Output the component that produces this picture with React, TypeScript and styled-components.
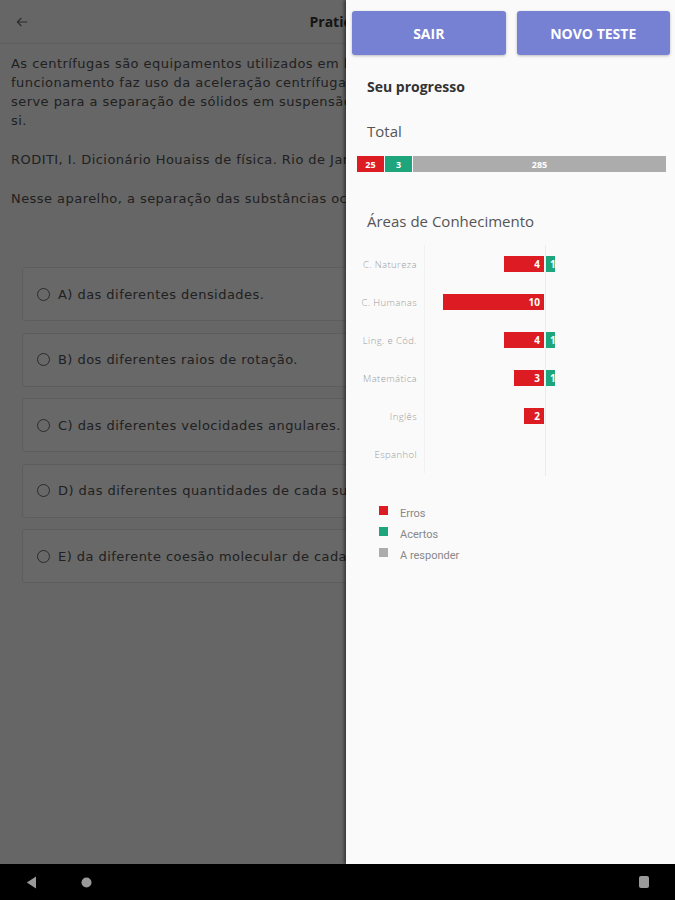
import React from 'react';
import styled, { createGlobalStyle } from 'styled-components';

const GlobalStyle = createGlobalStyle`
	html, body {
		margin: 0;
		padding: 0;
		background: #000;
	}
	* {
		box-sizing: border-box;
	}
`;

const Screen = styled.div`
	width: 675px;
	height: 900px;
	display: flex;
	flex-direction: column;
	overflow: hidden;
	font-family: 'Open Sans', sans-serif;
`;

const Stage = styled.div`
	flex: 1;
	display: flex;
	overflow: hidden;
`;

/* the question screen behind the drawer, only its left part shows */
const Page = styled.div`
	position: relative;
	flex: 1;
	overflow: hidden;
	background: #f7f7f7;
	color: #505050;
`;

const PageContent = styled.div`
	width: 675px;
`;

const Header = styled.div`
	height: 44px;
	display: flex;
	align-items: center;
	padding: 0 14px;
	border-bottom: 1px solid #e4e4e4;
`;

const BackButton = styled.span`
	display: flex;
	align-items: center;
	color: #666;
`;

const Title = styled.div`
	flex: 1;
	text-align: center;
	font-weight: 700;
	font-size: 14px;
	color: #333;
	margin-right: 16px;
`;

const Statement = styled.div`
	padding: 10px 11px 0;
	font-family: 'DejaVu Sans', sans-serif;
	font-size: 13px;
	letter-spacing: 0.45px;
	line-height: 19px;
`;

const Line = styled.div`
	white-space: nowrap;
`;

const Paragraph = styled.div`
	margin-bottom: 20px;
`;

const Options = styled.div`
	margin-top: 59px;
	padding: 0 14px 0 22px;
	display: flex;
	flex-direction: column;
	gap: 11.5px;
`;

const Option = styled.div`
	height: 54px;
	display: flex;
	align-items: center;
	gap: 8px;
	padding-left: 14px;
	background: #fcfcfc;
	border: 1px solid #e2e2e2;
	border-radius: 3px;
	font-family: 'DejaVu Sans', sans-serif;
	font-size: 13px;
	letter-spacing: 0.45px;
	white-space: nowrap;
`;

const Radio = styled.span`
	width: 13px;
	height: 13px;
	border-radius: 50%;
	border: 1.5px solid #666;
	flex-shrink: 0;
`;

const Scrim = styled.div`
	position: absolute;
	inset: 0;
	background: rgba(0, 0, 0, 0.59);
`;

const Drawer = styled.aside`
	position: relative;
	z-index: 1;
	width: 329px;
	flex-shrink: 0;
	background: #fafafa;
	box-shadow: -2px 0 3px rgba(0, 0, 0, 0.45);
	padding: 11px 5px 0 6px;
	display: flex;
	flex-direction: column;
`;

const ButtonRow = styled.div`
	display: flex;
	gap: 11px;
`;

const ActionButton = styled.button`
	flex: 1;
	height: 44px;
	border: none;
	border-radius: 3px;
	background: #7681d3;
	color: #fff;
	font-family: 'Open Sans', sans-serif;
	font-weight: 700;
	font-size: 14px;
	box-shadow: 0 1px 3px rgba(0, 0, 0, 0.25);
`;

const Section = styled.div`
	padding-left: 15px;
`;

const Heading = styled.div<{ $bold?: boolean; $top: number }>`
	margin-top: ${p => p.$top}px;
	font-size: ${p => (p.$bold ? 14 : 15)}px;
	line-height: 20px;
	font-weight: ${p => (p.$bold ? 700 : 400)};
	color: ${p => (p.$bold ? '#333' : '#555')};
`;

const TotalBar = styled.div`
	margin: 15px 4px 0 5px;
	height: 16px;
	display: flex;
	gap: 1px;
`;

const Segment = styled.div<{ $color: string; $grow?: boolean }>`
	${p => (p.$grow ? 'flex: 1;' : 'width: 27px;')}
	background: ${p => p.$color};
	color: #fff;
	font-size: 9px;
	font-weight: 700;
	display: flex;
	align-items: center;
	justify-content: center;
`;

const Chart = styled.div`
	margin-top: 14px;
	display: grid;
	grid-template-columns: 65px 1fr;
	column-gap: 7px;
	width: 200px;
`;

const Labels = styled.div`
	display: flex;
	flex-direction: column;
`;

const Label = styled.div`
	height: 38px;
	display: flex;
	align-items: center;
	justify-content: flex-end;
	font-size: 9.5px;
	letter-spacing: 0.4px;
	font-weight: 300;
	color: #9c9c9c;
	white-space: nowrap;
`;

const Plot = styled.div`
	position: relative;
	border-left: 1px solid #f0f0f0;
	display: flex;
	flex-direction: column;
`;

const ZeroLine = styled.div`
	position: absolute;
	top: 0;
	bottom: -3px;
	left: 120px;
	width: 1px;
	background: #ececec;
`;

const BarRow = styled.div`
	height: 38px;
	display: flex;
	align-items: center;
`;

const NegSide = styled.div`
	width: 119px;
	display: flex;
	justify-content: flex-end;
`;

const Bar = styled.div<{ $color: string; $right?: boolean }>`
	height: 16px;
	background: ${p => p.$color};
	color: #fff;
	font-size: 10px;
	font-weight: 700;
	display: flex;
	align-items: center;
	justify-content: ${p => (p.$right ? 'flex-start' : 'flex-end')};
	padding: ${p => (p.$right ? '0 0 0 5px' : '0 4px 0 0')};
	overflow: hidden;
	white-space: nowrap;
`;

const Legend = styled.div`
	margin-top: 34px;
	padding-left: 27px;
	display: flex;
	flex-direction: column;
	gap: 8px;
`;

const LegendItem = styled.div`
	display: flex;
	align-items: center;
	gap: 12px;
	font-family: Roboto, sans-serif;
	font-size: 11px;
	color: #888;
	height: 13px;
`;

const Swatch = styled.span<{ $color: string }>`
	width: 9px;
	height: 9px;
	background: ${p => p.$color};
	margin-top: -6px;
`;

const NavBar = styled.div`
	height: 36px;
	background: #000;
	display: flex;
	align-items: center;
	padding: 0 26px;
`;

const NavGroup = styled.div`
	flex: 1;
	display: flex;
	align-items: center;
	gap: 44px;
`;

const Recents = styled.span`
	width: 10px;
	height: 12px;
	border-radius: 2px;
	background: #9a9a9a;
`;

const RED = '#dc1c22';
const GREEN = '#1fa57c';
const GREY = '#acacac';
const UNIT = 10.1;

const areas = [
	{ name: 'C. Natureza', erros: 4, acertos: 1 },
	{ name: 'C. Humanas', erros: 10, acertos: 0 },
	{ name: 'Ling. e Cód.', erros: 4, acertos: 1 },
	{ name: 'Matemática', erros: 3, acertos: 1 },
	{ name: 'Inglês', erros: 2, acertos: 0 },
	{ name: 'Espanhol', erros: 0, acertos: 0 }
];

const options = [
	'A) das diferentes densidades.',
	'B) dos diferentes raios de rotação.',
	'C) das diferentes velocidades angulares.',
	'D) das diferentes quantidades de cada substância.',
	'E) da diferente coesão molecular de cada substância.'
];

const App: React.FC = () => {
	return (
		<Screen>
			<GlobalStyle />
			<Stage>
				<Page>
					<PageContent>
						<Header>
							<BackButton>
								<svg width="16" height="16" viewBox="0 0 24 24" fill="none" stroke="currentColor" strokeWidth="1.6">
									<path d="M20 12H5M11 6l-6 6 6 6" />
								</svg>
							</BackButton>
							<Title>Praticar</Title>
						</Header>
						<Statement>
							<Paragraph>
								<Line>As centrífugas são equipamentos utilizados em laboratórios, clínicas e indústrias. Seu</Line>
								<Line>funcionamento faz uso da aceleração centrífuga obtida pela rotação de um recipiente e que</Line>
								<Line>serve para a separação de sólidos em suspensão em líquidos ou de líquidos misturados entre</Line>
								<Line>si.</Line>
							</Paragraph>
							<Paragraph>
								<Line>RODITI, I. Dicionário Houaiss de física. Rio de Janeiro: Objetiva, 2005 (adaptado).</Line>
							</Paragraph>
							<Line>Nesse aparelho, a separação das substâncias ocorre em função</Line>
						</Statement>
						<Options>
							{options.map(o => (
								<Option key={o}>
									<Radio />
									{o}
								</Option>
							))}
						</Options>
					</PageContent>
					<Scrim />
				</Page>
				<Drawer>
					<ButtonRow>
						<ActionButton>SAIR</ActionButton>
						<ActionButton>NOVO TESTE</ActionButton>
					</ButtonRow>
					<Section>
						<Heading $bold $top={22}>Seu progresso</Heading>
						<Heading $top={24}>Total</Heading>
					</Section>
					<TotalBar>
						<Segment $color={RED}>25</Segment>
						<Segment $color={GREEN}>3</Segment>
						<Segment $color={GREY} $grow>285</Segment>
					</TotalBar>
					<Section>
						<Heading $top={39}>Áreas de Conhecimento</Heading>
					</Section>
					<Chart>
						<Labels>
							{areas.map(a => (
								<Label key={a.name}>{a.name}</Label>
							))}
						</Labels>
						<Plot>
							<ZeroLine />
							{areas.map(a => (
								<BarRow key={a.name}>
									<NegSide>
										{a.erros > 0 && (
											<Bar $color={RED} style={{ width: a.erros * UNIT }}>
												{a.erros}
											</Bar>
										)}
									</NegSide>
									{a.acertos > 0 && (
										<Bar $color={GREEN} $right style={{ width: a.acertos * UNIT, marginLeft: 1 }}>
											{a.acertos}
										</Bar>
									)}
								</BarRow>
							))}
						</Plot>
					</Chart>
					<Legend>
						<LegendItem>
							<Swatch $color={RED} />
							Erros
						</LegendItem>
						<LegendItem>
							<Swatch $color={GREEN} />
							Acertos
						</LegendItem>
						<LegendItem>
							<Swatch $color={GREY} />
							A responder
						</LegendItem>
					</Legend>
				</Drawer>
			</Stage>
			<NavBar>
				<NavGroup>
					<svg width="11" height="13" viewBox="0 0 11 13">
						<path d="M10 0.5 L0.8 6.5 L10 12.5 Z" fill="#9a9a9a" />
					</svg>
					<svg width="11" height="11" viewBox="0 0 11 11">
						<circle cx="5.5" cy="5.5" r="5" fill="#9a9a9a" />
					</svg>
				</NavGroup>
				<Recents />
			</NavBar>
		</Screen>
	);
};

export default App;
